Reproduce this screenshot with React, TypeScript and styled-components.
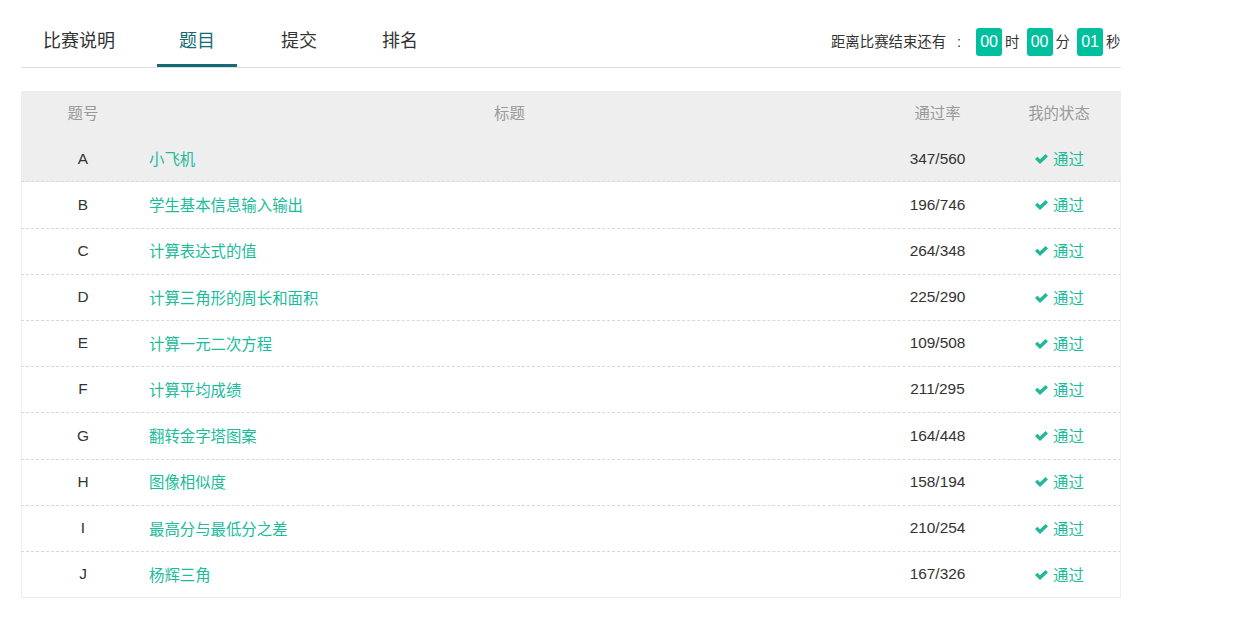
import React from "react";
import styled, { createGlobalStyle } from "styled-components";

const GlobalStyle = createGlobalStyle`
  html, body {
    margin: 0;
    padding: 0;
    background: #fff;
    font-family: "Liberation Sans", "Noto Sans CJK SC", sans-serif;
    color: #333;
  }
`;

const Page = styled.div`
  width: 1100px;
  margin-left: 21px;
  padding-top: 15px;
`;

const TabBar = styled.div`
  display: flex;
  justify-content: space-between;
  align-items: flex-start;
  height: 52px;
  border-bottom: 1px solid #ddd;
`;

const Tabs = styled.div`
  display: flex;
  gap: 21px;
`;

const Tab = styled.div<{ $active?: boolean; $wide?: boolean }>`
  height: 52px;
  width: ${(p) => (p.$wide ? "115px" : "80px")};
  box-sizing: border-box;
  padding-left: 22px;
  padding-top: 2px;
  line-height: 49px;
  font-size: 18px;
  white-space: nowrap;
  color: ${(p) => (p.$active ? "#146b74" : "#333")};
  border-bottom: ${(p) => (p.$active ? "3px solid #146b74" : "none")};
  margin-right: ${(p) => (p.$active ? "1px" : "0")};
`;

const Countdown = styled.div`
  display: flex;
  align-items: center;
  height: 54px;
  padding-right: 0.5px;
  font-size: 14.4px;
  color: #333;
  white-space: nowrap;
`;

const CountLabel = styled.span`
  margin-right: 15px;
  padding-bottom: 3px;
`;

const Colon = styled.span`
  margin-left: 11px;
`;

const TimeBox = styled.span`
  width: 26px;
  height: 28px;
  line-height: 27px;
  margin-right: 3px;
  border-radius: 3px;
  background: #00bf9c;
  color: #fff;
  font-size: 16px;
  text-align: center;
`;

const TimeUnit = styled.span`
  margin-right: 7.1px;
  padding-bottom: 3px;
  &:last-child {
    margin-right: 0;
  }
`;

const Table = styled.div`
  margin-top: 23px;
  font-size: 15.4px;
`;

const columns = "122px 731px 125px 1fr";

const HeadRow = styled.div`
  display: grid;
  grid-template-columns: ${columns};
  height: 45.2px;
  padding: 0 1px 3px;
  box-sizing: border-box;
  align-items: center;
  background: #eee;
  color: #999;
  text-align: center;
`;

const Row = styled.div<{ $hover?: boolean }>`
  display: grid;
  grid-template-columns: ${columns};
  height: 46.2px;
  padding-bottom: 0.5px;
  box-sizing: border-box;
  align-items: center;
  text-align: center;
  background: ${(p) => (p.$hover ? "#eee" : "#fff")};
  border: 1px solid #eee;
  border-width: 0 1px;
  border-bottom: 1px dashed #d8d8d8;
  &:last-child {
    border-bottom: 1px solid #eee;
  }
`;

const Title = styled.a`
  text-align: left;
  padding: 0 0 1px 5px;
  color: #1abc9c;
`;

const Rate = styled.span`
  color: #333;
`;

const Status = styled.span`
  display: flex;
  justify-content: center;
  align-items: center;
  gap: 5px;
  padding: 0 1px 1px 0;
  color: #1abc9c;
`;

const HeadStatus = styled.span`
  padding-right: 2px;
`;

const CheckSvg = styled.svg`
  margin-top: 2px;
`;

const CheckIcon = () => (
  <CheckSvg width="13" height="10" viewBox="0 0 13 10" aria-hidden="true">
    <polygon points="0,5 2.4,2.8 5,5.2 10.6,0 13,2.4 5,10" fill="#20b996" />
  </CheckSvg>
);

const problems = [
  ["A", "小飞机", "347/560"],
  ["B", "学生基本信息输入输出", "196/746"],
  ["C", "计算表达式的值", "264/348"],
  ["D", "计算三角形的周长和面积", "225/290"],
  ["E", "计算一元二次方程", "109/508"],
  ["F", "计算平均成绩", "211/295"],
  ["G", "翻转金字塔图案", "164/448"],
  ["H", "图像相似度", "158/194"],
  ["I", "最高分与最低分之差", "210/254"],
  ["J", "杨辉三角", "167/326"],
];

export default function App() {
  return (
    <Page>
      <GlobalStyle />
      <TabBar>
        <Tabs>
          <Tab $wide>比赛说明</Tab>
          <Tab $active>题目</Tab>
          <Tab>提交</Tab>
          <Tab>排名</Tab>
        </Tabs>
        <Countdown>
          <CountLabel>
            距离比赛结束还有<Colon>:</Colon>
          </CountLabel>
          <TimeBox>00</TimeBox>
          <TimeUnit>时</TimeUnit>
          <TimeBox>00</TimeBox>
          <TimeUnit>分</TimeUnit>
          <TimeBox>01</TimeBox>
          <TimeUnit>秒</TimeUnit>
        </Countdown>
      </TabBar>
      <Table>
        <HeadRow>
          <span>题号</span>
          <span>标题</span>
          <span>通过率</span>
          <HeadStatus>我的状态</HeadStatus>
        </HeadRow>
        {problems.map(([id, title, rate], i) => (
          <Row key={id} $hover={i === 0}>
            <span>{id}</span>
            <Title>{title}</Title>
            <Rate>{rate}</Rate>
            <Status>
              <CheckIcon />
              <span>通过</span>
            </Status>
          </Row>
        ))}
      </Table>
    </Page>
  );
}
